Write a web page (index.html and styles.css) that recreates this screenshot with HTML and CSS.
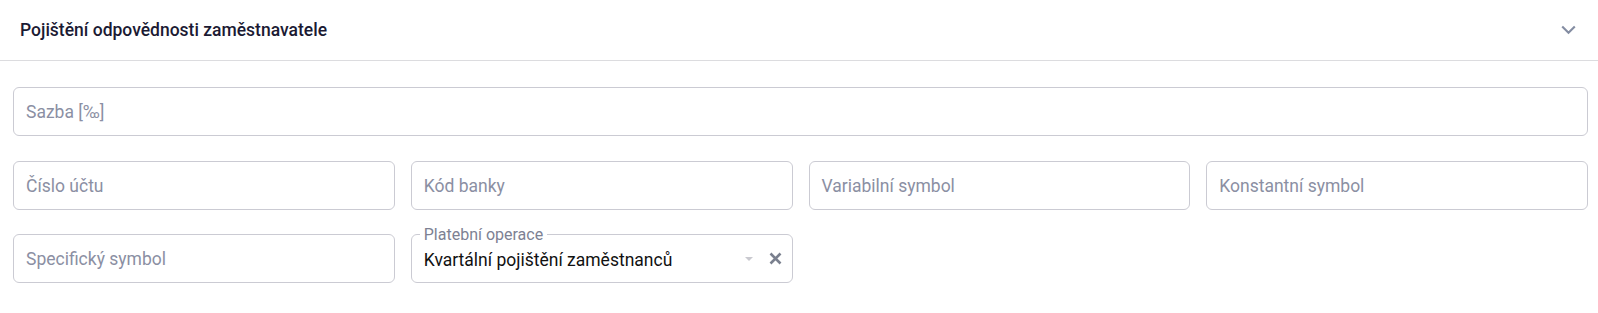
FILE: index.html
```html
<!DOCTYPE html>
<html lang="cs">
<head>
  <meta charset="UTF-8">
  <title>Pojištění odpovědnosti zaměstnavatele</title>
  <link rel="stylesheet" href="styles.css">
</head>
<body>
  <div class="panel">
    <div class="panel-header">
      <span class="panel-title">Pojištění odpovědnosti zaměstnavatele</span>
      <svg class="chevron" width="15" height="10" viewBox="0 0 15 10"><path d="M1.2 1.5 L7.5 7.8 L13.8 1.5" fill="none" stroke="#848da2" stroke-width="2.1"/></svg>
    </div>
    <div class="panel-body">
      <div class="field field-full"><span class="placeholder">Sazba [‰]</span></div>
      <div class="grid">
        <div class="field"><span class="placeholder">Číslo účtu</span></div>
        <div class="field"><span class="placeholder">Kód banky</span></div>
        <div class="field"><span class="placeholder">Variabilní symbol</span></div>
        <div class="field"><span class="placeholder">Konstantní symbol</span></div>
        <div class="field"><span class="placeholder">Specifický symbol</span></div>
        <div class="field field-select">
          <span class="legend">Platební operace</span>
          <span class="value">Kvartální pojištění zaměstnanců</span>
          <span class="arrow"></span>
          <svg class="clear" width="13" height="13" viewBox="0 0 13 13"><path d="M1.5 1.5 L11.5 11.5 M11.5 1.5 L1.5 11.5" stroke="#7a808e" stroke-width="2.6"/></svg>
        </div>
      </div>
    </div>
  </div>
</body>
</html>
```

FILE: styles.css
```css
body {
  margin: 0;
  background: #fff;
  font-family: 'Roboto', 'Noto Sans', sans-serif;
}
.panel-header {
  height: 61px;
  box-sizing: border-box;
  border-bottom: 1px solid #dcdcdf;
  display: flex;
  align-items: center;
  justify-content: space-between;
  padding: 0 22px 0 20px;
}
.panel-title {
  font-size: 17.5px;
  font-weight: 500;
  color: #1b1a33;
}
.panel-body {
  padding: 26px 10px 0 13px;
}
.field {
  position: relative;
  height: 49px;
  box-sizing: border-box;
  border: 1px solid #cbcbd3;
  border-radius: 6px;
  padding: 0 10px 0 12px;
  display: flex;
  align-items: center;
}
.field-full {
  margin-bottom: 25px;
}
.placeholder {
  font-size: 17.5px;
  color: #8b8fa3;
}
.grid {
  display: grid;
  grid-template-columns: repeat(4, 1fr);
  column-gap: 16px;
  row-gap: 24px;
}
.legend {
  position: absolute;
  top: -10px;
  left: 8px;
  padding: 0 4px;
  background: #fff;
  font-size: 16px;
  color: #7d8193;
}
.value {
  flex: 1;
  font-size: 17.5px;
  color: #111;
  padding-top: 2px;
}
.arrow {
  width: 0;
  height: 0;
  border-left: 4.5px solid transparent;
  border-right: 4.5px solid transparent;
  border-top: 4.5px solid #c9c9cf;
  margin-right: 16px;
}
```
